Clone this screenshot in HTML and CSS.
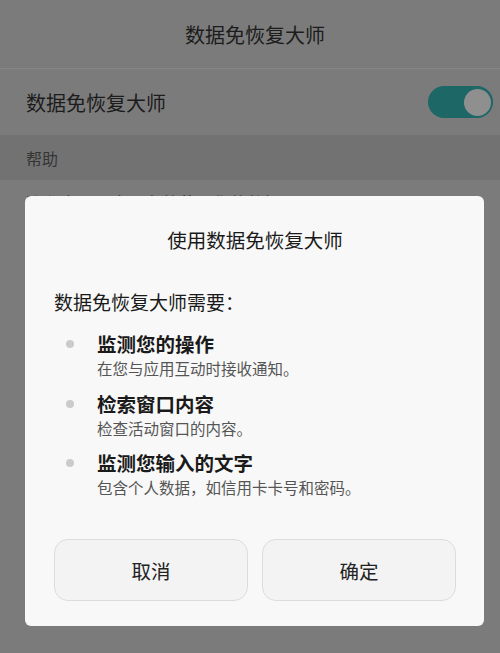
FILE: index.html
```html
<!DOCTYPE html>
<html lang="zh-CN">
<head>
    <meta charset="UTF-8">
    <meta name="viewport" content="width=device-width, initial-scale=1.0">
    <title>数据免恢复大师</title>
    <link rel="stylesheet" href="styles.css">
</head>
<body>

<div class="page">
    <div class="header">数据免恢复大师</div>

    <div class="row">
        <span class="row-label">数据免恢复大师</span>
        <div class="toggle"><div class="knob"></div></div>
    </div>

    <div class="section">帮助</div>

    <div class="row row-small">
        <span class="row-label">隐私声明：本服务将使用你的数据</span>
    </div>
</div>

<div class="overlay">
    <div class="dialog">
        <div class="dialog-title">使用数据免恢复大师</div>
        <div class="dialog-intro">数据免恢复大师需要：</div>

        <ul class="perms">
            <li>
                <span class="dot"></span>
                <div>
                    <div class="perm-title">监测您的操作</div>
                    <div class="perm-desc">在您与应用互动时接收通知。</div>
                </div>
            </li>
            <li>
                <span class="dot"></span>
                <div>
                    <div class="perm-title">检索窗口内容</div>
                    <div class="perm-desc">检查活动窗口的内容。</div>
                </div>
            </li>
            <li>
                <span class="dot"></span>
                <div>
                    <div class="perm-title">监测您输入的文字</div>
                    <div class="perm-desc">包含个人数据，如信用卡卡号和密码。</div>
                </div>
            </li>
        </ul>

        <div class="buttons">
            <button>取消</button>
            <button>确定</button>
        </div>
    </div>
</div>

</body>
</html>
```

FILE: styles.css
```css
* {
    box-sizing: border-box;
    margin: 0;
    padding: 0;
}
body {
    font-family: "Noto Sans CJK SC", "Noto Sans", sans-serif;
    background-color: #7b7b7b;
    width: 500px;
    height: 653px;
    overflow: hidden;
    position: relative;
}
.page {
    color: #1c1c1c;
}
.header {
    height: 69px;
    border-bottom: 1px solid #858585;
    display: flex;
    align-items: center;
    justify-content: center;
    font-size: 20px;
    padding: 1px 0 0 10px;
}
.row {
    height: 66px;
    display: flex;
    align-items: center;
    justify-content: space-between;
    padding: 0 7px 0 26px;
    font-size: 20px;
}
.row-small {
    height: 48px;
    font-size: 17px;
    align-items: flex-start;
    padding-top: 10px;
    color: #2a2a2a;
}
.toggle {
    width: 65px;
    height: 32px;
    border-radius: 16px;
    background-color: #1d6767;
    display: flex;
    justify-content: flex-end;
    align-items: center;
    padding-right: 2px;
}
.knob {
    width: 27px;
    height: 27px;
    border-radius: 50%;
    background-color: #8f8f8f;
}
.section {
    height: 45px;
    background-color: #727272;
    display: flex;
    align-items: center;
    padding-left: 26px;
    font-size: 16px;
    color: #353535;
}
.overlay {
    position: absolute;
    inset: 0;
    padding: 196px 16px 0 25px;
}
.dialog {
    width: 459px;
    height: 430px;
    background-color: #f8f8f8;
    border-radius: 6px;
    padding: 30px 28px 25px 29px;
    display: flex;
    flex-direction: column;
    color: #1a1a1a;
}
.dialog-title {
    text-align: center;
    font-size: 19.5px;
    line-height: 28px;
}
.dialog-intro {
    margin-top: 34px;
    font-size: 19px;
    line-height: 28px;
}
.perms {
    list-style: none;
    margin-top: 15px;
    display: flex;
    flex-direction: column;
    gap: 11.5px;
}
.perms li {
    display: flex;
    align-items: flex-start;
}
.dot {
    width: 8px;
    height: 8px;
    border-radius: 50%;
    background-color: #cbcbcb;
    margin: 9px 23px 0 12px;
    flex-shrink: 0;
}
.perm-title {
    font-size: 19.5px;
    font-weight: 700;
    line-height: 26px;
}
.perm-desc {
    font-size: 15.5px;
    line-height: 22px;
    color: #555;
}
.buttons {
    margin-top: auto;
    display: flex;
    gap: 14px;
}
.buttons button {
    flex: 1;
    height: 62px;
    border: 1px solid #dcdcdc;
    border-radius: 14px;
    background-color: #f3f3f3;
    font-family: inherit;
    font-size: 19.5px;
    color: #222;
}
```
